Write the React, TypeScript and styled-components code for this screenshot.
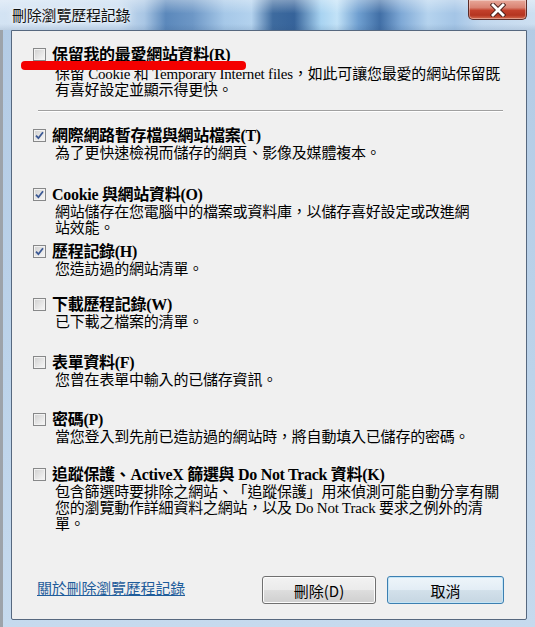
import React from 'react';
import styled, { createGlobalStyle } from 'styled-components';

const GlobalStyle = createGlobalStyle`
  html, body {
    margin: 0;
    padding: 0;
    width: 535px;
    height: 627px;
    overflow: hidden;
    background: #b9cfe6;
  }
  * { box-sizing: border-box; }
`;

const Window = styled.div`
  width: 535px;
  height: 627px;
  display: flex;
  flex-direction: column;
  background: linear-gradient(180deg, #b3cbe5 0%, #bcd3ea 60%, #c6daee 100%);
  border-left: 3px solid #9da3aa;
  font-family: "Noto Sans CJK TC", "Liberation Sans", sans-serif;
  text-spacing-trim: space-all;
`;

const TitleBar = styled.div`
  height: 30px;
  flex: none;
  display: flex;
  justify-content: space-between;
  align-items: center;
  margin-left: -3px;
  background:
    linear-gradient(180deg, rgba(255,255,255,.35) 0%, rgba(255,255,255,0) 45%, rgba(0,0,0,0) 80%, rgba(40,70,110,.12) 100%),
    linear-gradient(90deg,
      #d3e3f3 0%, #c9ddf1 22%, #a9c6e4 27%, #5b88bb 31%, #6d97c6 36%,
      #a6c8e8 42%, #b3d2ee 47%, #3e6b9f 51%, #36639a 55%, #a8d3f1 60%,
      #c2e2f7 63%, #6f9fd0 67%, #416fa6 71%, #7fa9d6 75%, #b5d3ee 80%,
      #a4c5e6 85%, #c2d8ee 90%, #cddff1 100%);
`;

const Title = styled.div`
  padding-left: 12px;
  font-size: 15px;
  line-height: 18px;
  color: #111;
  letter-spacing: -0.2px;
  text-shadow: 0 0 8px rgba(255,255,255,.9), 0 0 3px rgba(255,255,255,.9);
`;

const CloseButton = styled.div`
  align-self: flex-start;
  width: 59px;
  height: 20px;
  margin-right: 8px;
  display: flex;
  align-items: center;
  justify-content: center;
  border: 1px solid #5b2c28;
  border-top: none;
  border-radius: 0 0 5px 5px;
  background: linear-gradient(180deg, #e8a89a 0%, #d98373 40%, #c3402b 55%, #b53520 80%, #d56b4f 100%);
  box-shadow: inset 0 0 0 1px rgba(255,255,255,.35);
`;

const Frame = styled.div`
  flex: 1;
  display: flex;
  padding: 0 8px 7px 8px;
`;

const Client = styled.div`
  flex: 1;
  display: flex;
  flex-direction: column;
  background: #f0f0f0;
  border: 1px solid #56687f;
  border-radius: 0 0 2px 2px;
  padding: 15px 22px 15px 21px;
  font-family: "Liberation Serif", "Noto Sans CJK TC", serif;
  color: #000;
`;

const TopItem = styled.div`
  position: relative;
`;

const Strike = styled.span`
  position: absolute;
  left: -12px;
  top: 15px;
  width: 225px;
  height: 9px;
  border-radius: 4px;
  background: #f40000;
`;

const Item = styled.div<{ $h?: number }>`
  height: ${({ $h }) => ($h ? `${$h}px` : 'auto')};
  flex: none;
`;

const Header = styled.label`
  display: flex;
  align-items: center;
  gap: 6px;
  height: 17px;
`;

const Box = styled.span`
  width: 13px;
  height: 13px;
  flex: none;
  display: flex;
  align-items: center;
  justify-content: center;
  border: 1px solid #878889;
  background: linear-gradient(135deg, #cfcfcf 0%, #e4e4e4 50%, #f8f8f8 100%);
  box-shadow: inset 0 0 0 1px #f2f2f2;
`;

const Label = styled.span`
  font-size: 16px;
  font-weight: bold;
  line-height: 17px;
  white-space: nowrap;
  letter-spacing: -0.3px;
`;

const Desc = styled.div<{ $gap?: number }>`
  padding-left: 22px;
  margin-top: ${({ $gap }) => $gap ?? 1}px;
  font-size: 15px;
  line-height: 16px;
  white-space: nowrap;
  letter-spacing: -0.2px;
`;

const Separator = styled.div`
  height: 1px;
  margin: 12px 1px 16px 5px;
  background: #a0a0a0;
  box-shadow: 0 1px 0 #ffffff;
`;

const List = styled.div`
  display: flex;
  flex-direction: column;
`;

const Footer = styled.div`
  margin-top: auto;
  display: flex;
  align-items: center;
  gap: 11px;
`;

const HelpLink = styled.a`
  margin-left: 4px;
  margin-right: auto;
  margin-bottom: 5px;
  font-family: "Noto Sans CJK TC", sans-serif;
  font-size: 15px;
  line-height: 16px;
  color: #1f5d9b;
  text-decoration: underline;
  letter-spacing: -0.2px;
  cursor: pointer;
`;

const Button = styled.button<{ $default?: boolean }>`
  width: ${({ $default }) => ($default ? '117px' : '114px')};
  height: 28px;
  padding: 0;
  border-radius: 3px;
  font-family: "Noto Sans CJK TC", sans-serif;
  font-size: 15px;
  color: #000;
  border: 1px solid ${({ $default }) => ($default ? '#3c7fb1' : '#707070')};
  background: ${({ $default }) =>
    $default
      ? 'linear-gradient(180deg, #eef5fa 0%, #e3edf5 48%, #d2e0ea 52%, #c6d6e2 100%)'
      : 'linear-gradient(180deg, #f2f2f2 0%, #ebebeb 48%, #dddddd 52%, #cfcfcf 100%)'};
  box-shadow: inset 0 0 0 1px ${({ $default }) => ($default ? '#c4e5f6' : '#fcfcfc')};
`;

function Check({ checked }: { checked: boolean }) {
  return (
    <Box>
      {checked && (
        <svg width="9" height="9" viewBox="0 0 9 9">
          <path d="M1 4.6 L3.4 7.2 L8 1.2" fill="none" stroke="#3a5894" strokeWidth="1.8" />
        </svg>
      )}
    </Box>
  );
}

type Entry = { label: string; checked: boolean; lines: string[]; h?: number };

const entries: Entry[] = [
  {
    label: '網際網路暫存檔與網站檔案(T)',
    checked: true,
    lines: ['為了更快速檢視而儲存的網頁、影像及媒體複本。'],
    h: 59,
  },
  {
    label: 'Cookie 與網站資料(O)',
    checked: true,
    lines: ['網站儲存在您電腦中的檔案或資料庫，以儲存喜好設定或改進網', '站效能。'],
    h: 57,
  },
  { label: '歷程記錄(H)', checked: true, lines: ['您造訪過的網站清單。'], h: 53 },
  { label: '下載歷程記錄(W)', checked: false, lines: ['已下載之檔案的清單。'], h: 58 },
  { label: '表單資料(F)', checked: false, lines: ['您曾在表單中輸入的已儲存資訊。'], h: 57 },
  {
    label: '密碼(P)',
    checked: false,
    lines: ['當您登入到先前已造訪過的網站時，將自動填入已儲存的密碼。'],
    h: 55,
  },
  {
    label: '追蹤保護、ActiveX 篩選與 Do Not Track 資料(K)',
    checked: false,
    lines: [
      '包含篩選時要排除之網站、「追蹤保護」用來偵測可能自動分享有關',
      '您的瀏覽動作詳細資料之網站，以及 Do Not Track 要求之例外的清',
      '單。',
    ],
  },
];

function Lines({ lines, gap }: { lines: string[]; gap?: number }) {
  return (
    <Desc $gap={gap}>
      {lines.map((l, i) => (
        <div key={i}>{l}</div>
      ))}
    </Desc>
  );
}

export default function App() {
  return (
    <>
      <GlobalStyle />
      <Window>
        <TitleBar>
          <Title>刪除瀏覽歷程記錄</Title>
          <CloseButton>
            <svg width="16" height="14" viewBox="0 0 16 14">
              <path d="M3 2 L13 12 M13 2 L3 12" stroke="#4a1f1a" strokeWidth="4.6" strokeLinecap="square" />
              <path d="M3 2 L13 12 M13 2 L3 12" stroke="#ffffff" strokeWidth="2.8" strokeLinecap="square" />
            </svg>
          </CloseButton>
        </TitleBar>
        <Frame>
          <Client>
            <TopItem>
              <Header>
                <Check checked={false} />
                <Label>保留我的最愛網站資料(R)</Label>
              </Header>
              <Lines
                gap={3}
                lines={[
                  '保留 Cookie 和 Temporary Internet files，如此可讓您最愛的網站保留既',
                  '有喜好設定並顯示得更快。',
                ]}
              />
              <Strike />
            </TopItem>
            <Separator />
            <List>
              {entries.map((e) => (
                <Item key={e.label} $h={e.h}>
                  <Header>
                    <Check checked={e.checked} />
                    <Label>{e.label}</Label>
                  </Header>
                  <Lines lines={e.lines} />
                </Item>
              ))}
            </List>
            <Footer>
              <HelpLink>關於刪除瀏覽歷程記錄</HelpLink>
              <Button>刪除(D)</Button>
              <Button $default>取消</Button>
            </Footer>
          </Client>
        </Frame>
      </Window>
    </>
  );
}
